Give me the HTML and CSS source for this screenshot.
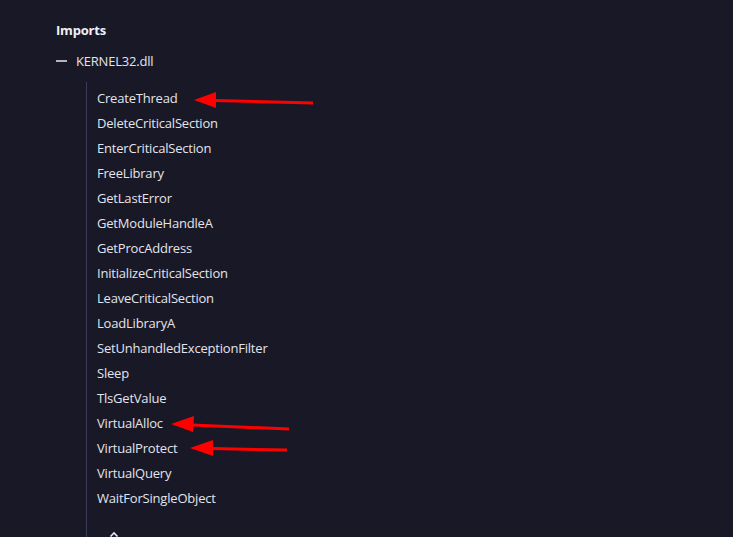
FILE: index.html
```html
<!DOCTYPE html>
<html>
<head>
<meta charset="utf-8">
<link rel="stylesheet" href="styles.css">
</head>
<body>
<div class="page">
  <h2 class="title">Imports</h2>
  <div class="dll">
    <span class="dash"></span>
    <span class="dll-name">KERNEL32.dll</span>
  </div>
  <ul class="funcs">
    <li>CreateThread</li>
    <li>DeleteCriticalSection</li>
    <li>EnterCriticalSection</li>
    <li>FreeLibrary</li>
    <li>GetLastError</li>
    <li>GetModuleHandleA</li>
    <li>GetProcAddress</li>
    <li>InitializeCriticalSection</li>
    <li>LeaveCriticalSection</li>
    <li>LoadLibraryA</li>
    <li>SetUnhandledExceptionFilter</li>
    <li>Sleep</li>
    <li>TlsGetValue</li>
    <li>VirtualAlloc</li>
    <li>VirtualProtect</li>
    <li>VirtualQuery</li>
    <li>WaitForSingleObject</li>
    <li class="more"><svg width="10" height="6" viewBox="0 0 10 6"><path d="M1.5 5.5 L5 2 L8.5 5.5" fill="none" stroke="#e6e6ee" stroke-width="1.6"/></svg></li>
  </ul>
  <svg class="arrows" width="733" height="537" viewBox="0 0 733 537">
    <g fill="#ff0000" stroke="#ff0000">
      <line x1="313" y1="103" x2="214" y2="100.6" stroke-width="3"/>
      <polygon points="194,100 216,92 216,108" stroke="none"/>
      <line x1="289" y1="429" x2="192" y2="425" stroke-width="3"/>
      <polygon points="171,424 194,416 193,432" stroke="none"/>
      <line x1="287" y1="450" x2="211" y2="448.6" stroke-width="3"/>
      <polygon points="190,448 213,440 213,456" stroke="none"/>
    </g>
  </svg>
</div>
</body>
</html>
```
FILE: styles.css
```css
html, body {
  margin: 0;
  padding: 0;
  background: #181826;
  height: 100%;
  overflow: hidden;
}
.page {
  position: relative;
  width: 733px;
  height: 537px;
  overflow: hidden;
  font-family: "Open Sans", "Noto Sans", sans-serif;
  color: #e4e4ec;
  font-size: 13px;
  letter-spacing: -0.2px;
  padding: 21px 0 0 56px;
  box-sizing: border-box;
}
.title {
  margin: 0;
  font-size: 13px;
  font-weight: 700;
  line-height: 18px;
  color: #f0f0f6;
}
.dll {
  display: flex;
  align-items: center;
  margin-top: 13px;
  height: 18px;
}
.dash {
  display: block;
  width: 11px;
  height: 2px;
  background: #b4b4be;
}
.dll-name {
  margin-left: 9px;
}
.funcs {
  list-style: none;
  margin: 12px 0 0 30px;
  padding: 4px 0 0 10px;
  border-left: 1px solid #3a3d55;
  height: 460px;
}
.funcs li {
  line-height: 25px;
  height: 25px;
}
.funcs li.more {
  margin-top: 20px;
  padding-left: 12px;
  line-height: 6px;
  height: 6px;
}
.funcs li.more svg {
  display: block;
}
.arrows {
  position: absolute;
  left: 0;
  top: 0;
  pointer-events: none;
}
```
